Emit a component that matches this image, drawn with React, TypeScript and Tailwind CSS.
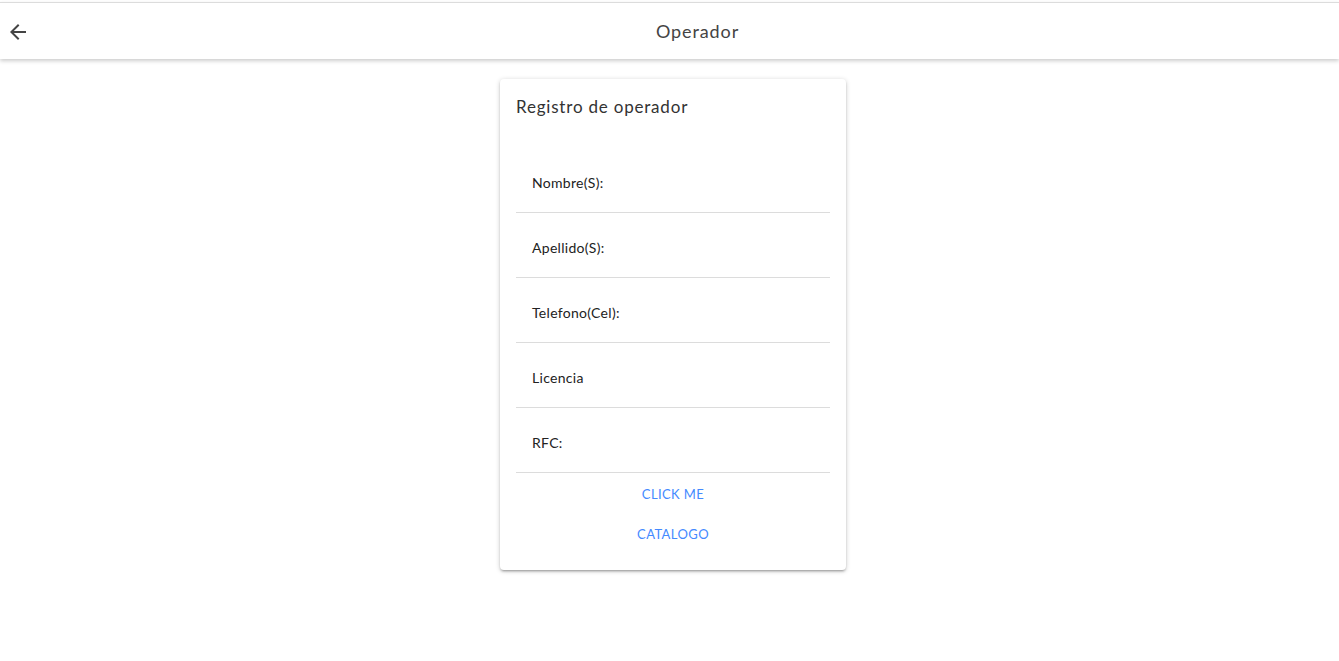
import React from "react";

export default function App() {
  const fields = ["Nombre(S):", "Apellido(S):", "Telefono(Cel):", "Licencia", "RFC:"];
  return (
    <div className="min-h-[661px] bg-white" style={{ fontFamily: "Lato, 'Open Sans', sans-serif" }}>
      <div className="pt-[2px]">
        <header className="h-[57px] border-t border-[#dcdcdc] bg-white flex items-center shadow-[0_2px_4px_rgba(0,0,0,0.2)]">
          <div className="w-[56px] h-full flex items-center pl-[6px] pt-[1px]">
            <button className="w-6 h-6 flex items-center justify-center text-[#444]">
              <svg width="24" height="24" viewBox="0 0 24 24" fill="currentColor">
                <path d="M20 11H7.83l5.59-5.59L12 4l-8 8 8 8 1.41-1.41L7.83 13H20v-2z" />
              </svg>
            </button>
          </div>
          <h1 className="flex-1 text-center text-[18px] text-[#444] leading-6 tracking-[0.9px]">Operador</h1>
        </header>
      </div>
      <div className="flex justify-center pt-[20px] pl-[7px]">
        <div className="w-[346px] rounded-[4px] bg-white px-4 pt-4 pb-[17px] shadow-[0_2px_2px_0_rgba(0,0,0,0.14),0_3px_1px_-2px_rgba(0,0,0,0.12),0_1px_5px_0_rgba(0,0,0,0.2)]">
          <h2 className="text-[17px] leading-6 text-[#333] tracking-[0.8px]">Registro de operador</h2>
          <div className="mt-[29px]">
            {fields.map((f) => (
              <div key={f} className="border-b border-[#dcdcdc] pl-4 pt-[25px] pb-[19px]">
                <span className="block text-[14px] leading-5 text-[#222] tracking-[0.3px]">{f}</span>
              </div>
            ))}
          </div>
          <div className="flex flex-col items-center pt-1">
            <button className="h-9 px-4 text-[13px] uppercase tracking-[0.4px] text-[#448aff]">Click me</button>
            <button className="mt-1 h-9 px-4 text-[13px] uppercase tracking-[0.4px] text-[#448aff]">Catalogo</button>
          </div>
        </div>
      </div>
    </div>
  );
}
